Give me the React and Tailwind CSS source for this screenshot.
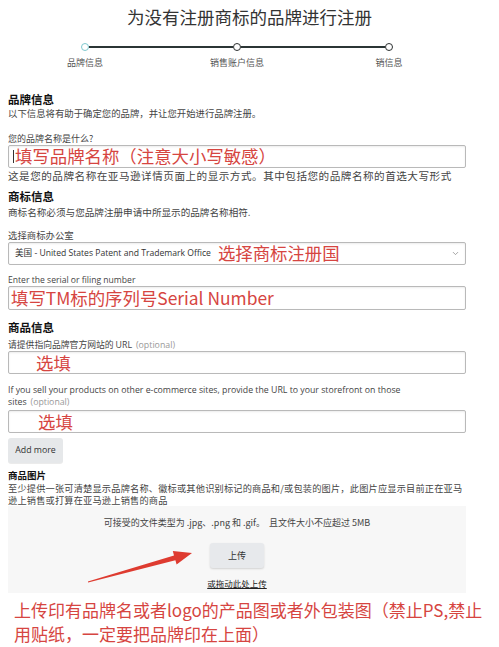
import { ChevronDown } from 'lucide-react'

const red = 'text-[#d64541]'

function Field({ children, className = '' }) {
  return (
    <div
      className={`flex h-[23px] w-[458px] items-center rounded-[2px] border border-[#b9b9b9] bg-white shadow-[inset_0_1px_2px_rgba(0,0,0,0.08)] ${className}`}
    >
      {children}
    </div>
  )
}

function Step({ active }) {
  return (
    <span
      className={`h-[8px] w-[8px] shrink-0 rounded-full border-[1.5px] bg-white ${active ? 'border-[#7fc9cf]' : 'border-[#2b2f30]'}`}
    />
  )
}

export default function App() {
  return (
    <div className="relative h-[647px] w-[499px] overflow-hidden bg-white font-['Noto_Sans_CJK_SC',sans-serif] text-[#333]">
      <h1 className="pt-[6px] text-center text-[17.5px] font-normal leading-[22px] text-[#333]">
        为没有注册商标的品牌进行注册
      </h1>

      <div className="ml-[81px] mt-[15px] flex w-[312px] items-center">
        <Step active />
        <span className="h-[1.5px] flex-1 bg-[#2b3535]" />
        <Step />
        <span className="h-[1.5px] flex-1 bg-[#2b3535]" />
        <Step />
      </div>
      <div className="ml-[45px] mt-[6px] flex gap-[72px] text-[9px] leading-[12px] text-[#555]">
        <span className="w-[80px] text-center">品牌信息</span>
        <span className="w-[80px] text-center">销售账户信息</span>
        <span className="w-[80px] text-center">销信息</span>
      </div>

      <div className="flex flex-col px-[8px]">
        <h2 className="mt-[23px] text-[11.5px] font-bold leading-[15px] text-[#111]">品牌信息</h2>
        <p className="mt-[1px] text-[9.4px] leading-[11px] text-[#444]">以下信息将有助于确定您的品牌，并让您开始进行品牌注册。</p>

        <p className="mt-[14px] text-[9px] leading-[11px] text-[#444]">您的品牌名称是什么?</p>
        <Field className="mt-[0.5px]">
          <span className="ml-[4px] h-[13px] border-l border-[#333]" />
          <span className={`ml-[1px] text-[17.4px] leading-[18px] ${red}`}>填写品牌名称（注意大小写敏感）</span>
        </Field>
        <p className="mt-[2.5px] text-[10.6px] leading-[11px] tracking-[0.5px] text-[#444]">
          这是您的品牌名称在亚马逊详情页面上的显示方式。其中包括您的品牌名称的首选大写形式
        </p>

        <h2 className="mt-[8px] text-[11.5px] font-bold leading-[15px] text-[#111]">商标信息</h2>
        <p className="mt-[3px] text-[9.6px] leading-[11px] text-[#444]">商标名称必须与您品牌注册申请中所显示的品牌名称相符.</p>

        <p className="mt-[12px] text-[9.4px] leading-[11px] text-[#444]">选择商标办公室</p>
        <Field className="mt-[0.5px] pl-[6px] pr-[5px]">
          <span className="font-['Open_Sans','Noto_Sans_CJK_SC',sans-serif] text-[8.6px] leading-[12px] text-[#333]">
            美国 - United States Patent and Trademark Office
          </span>
          <span className={`ml-[7px] text-[17.4px] leading-[18px] ${red}`}>选择商标注册国</span>
          <ChevronDown className="ml-auto h-[9px] w-[9px] text-[#888]" strokeWidth={2} />
        </Field>

        <p className="mt-[10.5px] font-['Open_Sans',sans-serif] text-[8.6px] leading-[11px] text-[#444]">
          Enter the serial or filing number
        </p>
        <Field className="h-[24px]">
          <span className={`ml-[2px] text-[17.4px] leading-[18px] ${red}`}>填写TM标的序列号Serial Number</span>
        </Field>

        <h2 className="mt-[9.5px] text-[11.5px] font-bold leading-[15px] text-[#111]">商品信息</h2>
        <p className="mt-[4px] text-[8.8px] leading-[11px] text-[#444]">
          请提供指向品牌官方网站的 <span className="font-['Open_Sans',sans-serif]">URL</span>
          <span className="ml-[4px] font-['Open_Sans',sans-serif] text-[#999]">(optional)</span>
        </p>
        <Field className="mt-[0.5px]">
          <span className={`ml-[27px] text-[17.4px] leading-[18px] ${red}`}>选填</span>
        </Field>

        <p className="mt-[10px] w-[430px] font-['Open_Sans',sans-serif] text-[8.75px] leading-[12px] text-[#444]">
          If you sell your products on other e-commerce sites, provide the URL to your storefront on those sites
          <span className="ml-[4px] text-[#999]">(optional)</span>
        </p>
        <Field className="mt-[2px]">
          <span className={`ml-[29px] text-[17.4px] leading-[18px] ${red}`}>选填</span>
        </Field>

        <button className="mt-[5px] h-[25px] w-[55px] rounded-[3px] bg-[#e6e8ea] font-['Open_Sans',sans-serif] text-[8.8px] text-[#333] shadow-[0_1px_0_rgba(0,0,0,0.08)]">
          Add more
        </button>

        <h2 className="mt-[5.5px] text-[9.5px] font-bold leading-[13px] text-[#111]">商品图片</h2>
        <p className="mt-[0.5px] text-[9.2px] leading-[12px] tracking-[0.2px] text-[#444]">
          至少提供一张可清楚显示品牌名称、徽标或其他识别标记的商品和/或包装的图片，此图片应显示目前正在亚马
          <br />
          逊上销售或打算在亚马逊上销售的商品
        </p>

        <div className="flex h-[87px] w-[458px] flex-col items-center bg-[#f7f7f7]">
          <p className="mt-[11px] text-[9px] leading-[12px] text-[#444]">
            可接受的文件类型为 .jpg、.png 和 .gif。&nbsp;&nbsp;且文件大小不应超过 5MB
          </p>
          <button className="mt-[14px] h-[25px] w-[54px] rounded-[3px] bg-[#e7e9ec] text-[9px] text-[#333] shadow-[0_1px_2px_rgba(0,0,0,0.15)]">
            上传
          </button>
          <p className="mt-[9px] text-[8.5px] leading-[12px] text-[#222] underline">或拖动此处上传</p>
        </div>

        <p className={`ml-[6px] mt-[5px] whitespace-nowrap text-[17px] leading-[24px] ${red}`}>
          上传印有品牌名或者logo的产品图或者外包装图（禁止PS,禁止
          <br />
          用贴纸，一定要把品牌印在上面）
        </p>
      </div>

      <svg className="pointer-events-none absolute inset-0" width="499" height="647" viewBox="0 0 499 647">
        <polygon
          points="87.9,581.5 174,555.4 172.8,551.1 192,553 176.6,564.5 175.4,560.2 88.1,582.5"
          fill="#de3b30"
        />
      </svg>
    </div>
  )
}
